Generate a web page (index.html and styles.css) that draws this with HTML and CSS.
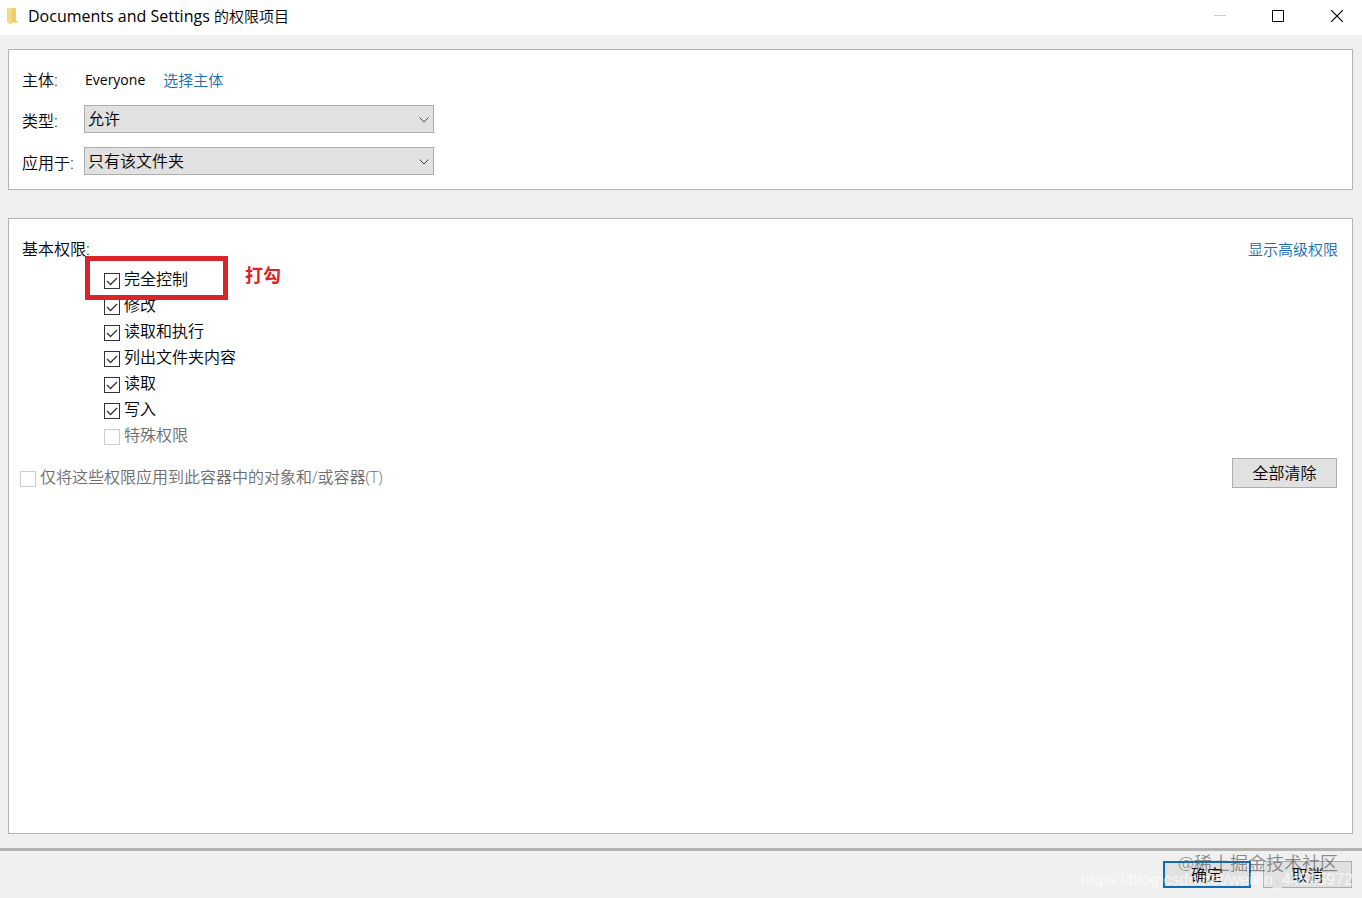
FILE: index.html
```
<!doctype html>
<html lang="zh-CN">
<head>
  <meta charset="utf-8">
  <title>Documents and Settings 的权限项目</title>
  <link rel="stylesheet" href="styles.css">
</head>
<body>
<header class="titlebar">
  <svg class="folder" width="12" height="18" viewBox="0 0 12 18">
    <path d="M1 1h9v13l2 1-1 1H6v1H4l-3-2z" fill="#f7dc8b"/>
    <path d="M8 1h2v12l2 2H5V3z" fill="#f0cd6c"/>
    <path d="M1 1l3 2v14l-3-2z" fill="#f5d780"/>
  </svg>
  <h1>Documents and Settings <span>的权限项目</span></h1>
  <div class="window-buttons">
    <button type="button" aria-label="最小化" disabled>
      <svg width="12" height="12" viewBox="0 0 12 12"><path d="M0 5.500h12" stroke="#ccc"/></svg>
    </button>
    <button type="button" aria-label="最大化">
      <svg width="12" height="12" viewBox="0 0 12 12"><path d="M.5.5h11v11H.5z" fill="none" stroke="#000"/></svg>
    </button>
    <button type="button" aria-label="关闭">
      <svg width="12" height="12" viewBox="0 0 12 12"><path d="M0 0l12 12M12 0L0 12" stroke="#000" stroke-width="1.200"/></svg>
    </button>
  </div>
</header>

<form class="dialog">
  <section class="panel principal">
    <span>主体:</span>
    <div class="who">
      <span>Everyone</span>
      <a href="#">选择主体</a>
    </div>
    <label for="type">类型:</label>
    <div class="dropdown">
      <select id="type"><option>允许</option></select>
      <svg width="10" height="6" viewBox="0 0 10 6"><path d="M.5.5L5 5 9.500.5" fill="none" stroke="#444"/></svg>
    </div>
    <label for="scope">应用于:</label>
    <div class="dropdown">
      <select id="scope"><option>只有该文件夹</option></select>
      <svg width="10" height="6" viewBox="0 0 10 6"><path d="M.5.5L5 5 9.500.5" fill="none" stroke="#444"/></svg>
    </div>
  </section>

  <section class="panel permissions">
    <div class="permissions-head">
      <span>基本权限:</span>
      <a href="#">显示高级权限</a>
    </div>
    <div class="permission-list">
      <label><input type="checkbox" checked>完全控制</label>
      <label><input type="checkbox" checked>修改</label>
      <label><input type="checkbox" checked>读取和执行</label>
      <label><input type="checkbox" checked>列出文件夹内容</label>
      <label><input type="checkbox" checked>读取</label>
      <label><input type="checkbox" checked>写入</label>
      <label class="off"><input type="checkbox" disabled>特殊权限</label>
      <!-- 红框标注 -->
      <div class="mark"></div>
      <strong class="mark-text">打勾</strong>
    </div>
    <div class="permissions-foot">
      <label class="off"><input type="checkbox" disabled>仅将这些权限应用到此容器中的对象和/或容器(T)</label>
      <button type="button" class="btn clear">全部清除</button>
    </div>
  </section>
</form>

<footer class="actions">
  <button type="button" class="btn primary">确定</button>
  <button type="button" class="btn">取消</button>
  <!-- 水印 -->
  <span class="watermark site">@稀土掘金技术社区</span>
  <span class="watermark url">https://blog.csdn.net/weixin_44545972</span>
</footer>
</body>
</html>
```
FILE: styles.css
```
* {
    box-sizing: border-box;
}
body {
    display: flex;
    flex-direction: column;
    min-height: 100vh;
    margin: 0;
    background-color: #f0f0f0;
    color: #000;
    font-family: "Open Sans", "Noto Sans CJK SC", sans-serif;
    font-size: 16px;
    font-weight: 350;
    line-height: 24px;
}
button,
select {
    font: inherit;
    color: inherit;
}
a {
    color: #1a6cb4;
    font-size: 15px;
    font-weight: 350;
    text-decoration: none;
}

.titlebar {
    display: flex;
    align-items: center;
    height: 35px;
    padding: 0 0 3px 6px;
    background-color: #fff;
}
.folder {
    margin-right: 10px;
}
.titlebar h1 {
    flex: 1;
    margin: 0;
    font-size: 16px;
    font-weight: 400;
}
.titlebar h1 span {
    font-size: 15px;
    font-weight: 350;
}
.window-buttons {
    display: flex;
    height: 32px;
}
.window-buttons button {
    display: flex;
    align-items: center;
    justify-content: center;
    width: 58px;
    padding: 0;
    border: 0;
    background: none;
}
.window-buttons button:last-child {
    width: 50px;
    margin-left: 5px;
}

.dialog {
    flex: 1;
    display: flex;
    flex-direction: column;
    gap: 28px;
    padding: 14px 9px 14px 8px;
}
.panel {
    border: 1px solid #b4b4b4;
    background-color: #fff;
}
.principal {
    display: grid;
    grid-template-columns: 62px 350px;
    row-gap: 13px;
    align-items: center;
    padding: 18px 13px 13px;
}
.principal label {
    padding-top: 2px;
}
.who {
    display: flex;
    gap: 18px;
    padding-left: 1px;
    font-size: 14px;
    font-weight: 400;
}
.dropdown {
    display: grid;
    align-items: center;
}
.dropdown select,
.dropdown svg {
    grid-area: 1 / 1;
}
.dropdown select {
    appearance: none;
    width: 100%;
    height: 28px;
    margin-bottom: 1px;
    padding: 0 3px;
    border: 1px solid #adadad;
    border-radius: 0;
    background-color: #e1e1e1;
}
.dropdown svg {
    justify-self: end;
    margin-right: 5px;
    pointer-events: none;
}

.permissions {
    flex: 1;
    padding: 18px 14px 18px 11px;
}
.permissions-head {
    display: flex;
    justify-content: space-between;
    padding-left: 2px;
}
.permission-list {
    position: relative;
    display: flex;
    flex-direction: column;
    align-items: flex-start;
    padding: 6px 0 0 84px;
}
.permissions label {
    display: flex;
    align-items: center;
    gap: 4px;
    height: 26px;
    padding-bottom: 2px;
}
.permissions .off {
    color: #6d6d6d;
}
input[type="checkbox"] {
    appearance: none;
    width: 16px;
    height: 16px;
    margin: 4px 0 0;
    border: 1px solid #333;
    background-color: #fff;
}
input[type="checkbox"]:checked {
    background-image: url("data:image/svg+xml,%3Csvg xmlns='http://www.w3.org/2000/svg' viewBox='0 0 14 14'%3E%3Cpath d='M2 7l3.500 3.500L12 4' fill='none' stroke='%23333' stroke-width='1.300'/%3E%3C/svg%3E");
}
input[type="checkbox"]:disabled {
    border-color: #ccc;
}
.mark {
    position: absolute;
    top: -5px;
    left: 65px;
    width: 143px;
    height: 44px;
    border: 5px solid #dc2329;
}
.mark-text {
    position: absolute;
    top: 2px;
    left: 225px;
    color: #dc2329;
    font-size: 18px;
    font-weight: bold;
}
.permissions-foot {
    display: flex;
    align-items: flex-start;
    justify-content: space-between;
    padding: 9px 1px 0 0;
}
.permissions-foot label {
    margin-top: 7px;
}

.btn {
    width: 89px;
    height: 27px;
    padding: 0;
    border: 1px solid #adadad;
    background-color: #e1e1e1;
}
.clear {
    width: 105px;
    height: 30px;
}
.primary {
    width: 88px;
    border: 2px solid #0f6cb5;
}
.actions {
    position: relative;
    display: flex;
    justify-content: flex-end;
    gap: 12px;
    padding: 10px 10px 10px;
    border-top: 3px solid #b4b4b4;
}
.watermark {
    position: absolute;
    white-space: nowrap;
    pointer-events: none;
}
.site {
    top: 0;
    right: 24px;
    color: rgba(90, 90, 90, 0.7);
    font-size: 18px;
}
.url {
    top: 17px;
    right: 9px;
    color: rgba(255, 255, 255, 0.7);
    font-family: "Liberation Sans", sans-serif;
    font-size: 16px;
}
```
